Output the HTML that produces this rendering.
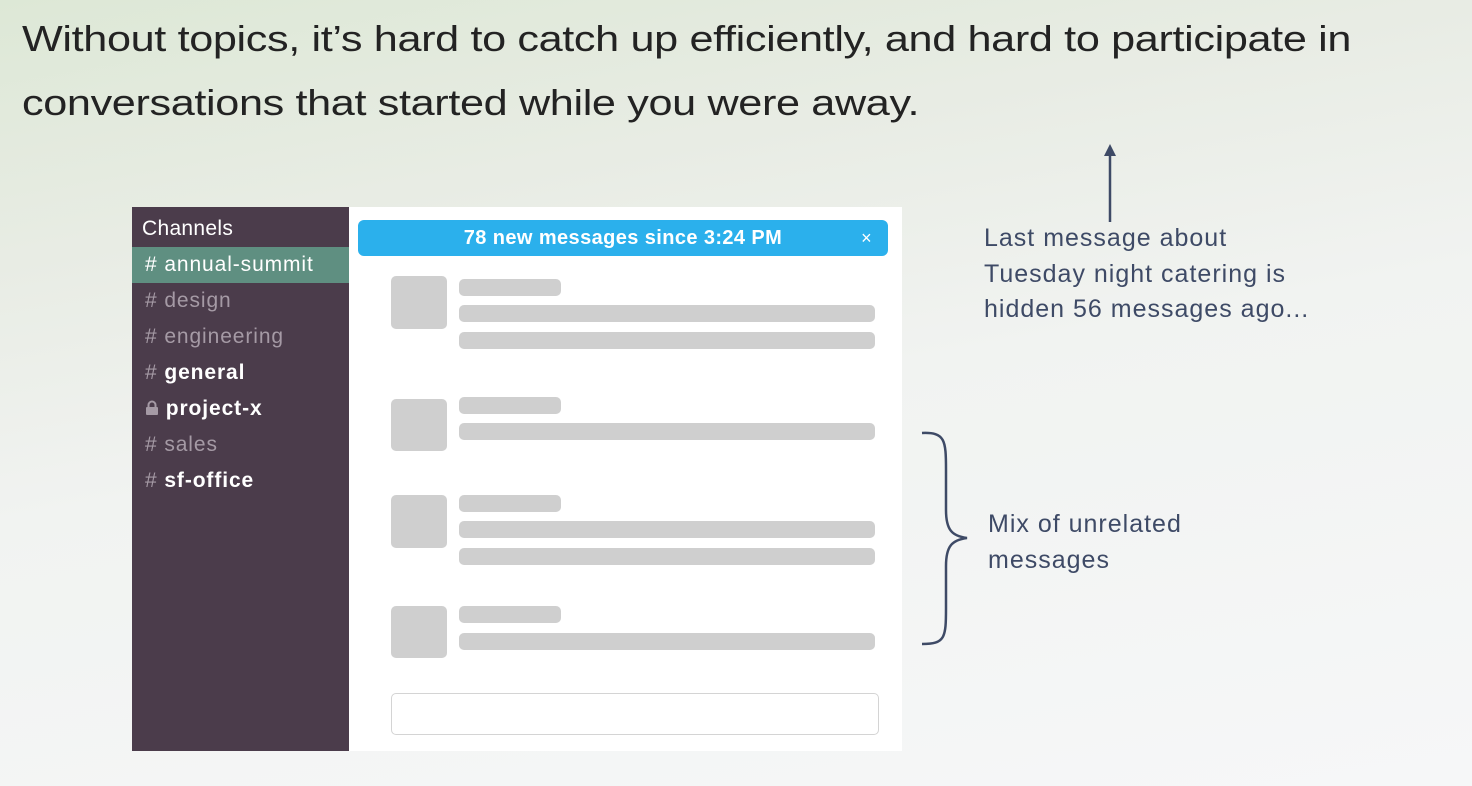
<!DOCTYPE html>
<html><head><style>
body{margin:0;width:1472px;height:786px;overflow:hidden;position:relative;font-family:"Liberation Sans",sans-serif;
background:linear-gradient(170deg,#dde8d6 0%,#e8ece4 25%,#f1f3f1 50%,#f6f7f8 100%);}
.h{position:absolute;left:22px;font-size:36px;color:#232323;white-space:nowrap;letter-spacing:-0.3px;transform:scaleX(1.2);transform-origin:0 0}
.sb{position:absolute;left:132px;top:207px;width:217px;height:544px;background:#4b3c4b}
.main{position:absolute;left:349px;top:207px;width:553px;height:544px;background:#fff}
.ch{position:absolute;left:0;width:217px;height:36px;line-height:36px;font-size:21px;letter-spacing:0.9px;color:#fff;padding-left:13px;box-sizing:border-box;white-space:nowrap}
.dim{color:#a59aa5}
.b{font-weight:bold}
.g{position:absolute;background:#cfcfcf;border-radius:5px}
.t{position:absolute;color:#3e4a66;font-size:25px;letter-spacing:1px;line-height:35.5px;white-space:nowrap}
</style></head><body>
<div class="h" style="top:18px">Without topics, it’s hard to catch up efficiently, and hard to participate in</div>
<div class="h" style="top:82px">conversations that started while you were away.</div>

<div class="sb">
<div class="ch" style="top:4px;padding-left:10px;letter-spacing:0.3px">Channels</div>
<div class="ch" style="top:40px;background:#5f8f81"># annual-summit</div>
<div class="ch dim" style="top:76px"># design</div>
<div class="ch dim" style="top:112px"># engineering</div>
<div class="ch" style="top:148px"><span class="dim">#</span> <span class="b">general</span></div>
<div class="ch" style="top:184px"><svg width="14" height="16" viewBox="0 0 14 16" style="vertical-align:-1px"><path d="M3.5 7V5a3.5 3.5 0 0 1 7 0v2" fill="none" stroke="#a59aa5" stroke-width="2"/><rect x="1" y="7" width="12" height="8" rx="1" fill="#a59aa5"/></svg> <span class="b">project-x</span></div>
<div class="ch dim" style="top:220px"># sales</div>
<div class="ch" style="top:256px"><span class="dim">#</span> <span class="b">sf-office</span></div>
</div>

<div class="main"></div>
<div style="position:absolute;left:358px;top:220px;width:530px;height:36px;background:#2bb0ec;border-radius:6px;color:#fff;font-size:20px;letter-spacing:0.4px;font-weight:bold;line-height:36px;text-align:center">78 new messages since 3:24 PM<span style="position:absolute;right:16px;font-weight:normal;font-size:18px">×</span></div>

<div class="g" style="left:391px;top:276px;width:56px;height:53px"></div>
<div class="g" style="left:459px;top:279px;width:102px;height:17px"></div>
<div class="g" style="left:459px;top:305px;width:416px;height:17px"></div>
<div class="g" style="left:459px;top:332px;width:416px;height:17px"></div>

<div class="g" style="left:391px;top:399px;width:56px;height:52px"></div>
<div class="g" style="left:459px;top:397px;width:102px;height:17px"></div>
<div class="g" style="left:459px;top:423px;width:416px;height:17px"></div>

<div class="g" style="left:391px;top:495px;width:56px;height:53px"></div>
<div class="g" style="left:459px;top:495px;width:102px;height:17px"></div>
<div class="g" style="left:459px;top:521px;width:416px;height:17px"></div>
<div class="g" style="left:459px;top:548px;width:416px;height:17px"></div>

<div class="g" style="left:391px;top:606px;width:56px;height:52px"></div>
<div class="g" style="left:459px;top:606px;width:102px;height:17px"></div>
<div class="g" style="left:459px;top:633px;width:416px;height:17px"></div>

<div style="position:absolute;left:391px;top:693px;width:488px;height:42px;border:1.5px solid #d4d4d4;border-radius:5px;box-sizing:border-box"></div>

<svg style="position:absolute;left:0;top:0" width="1472" height="786">
<line x1="1110" y1="152" x2="1110" y2="222" stroke="#3e4a66" stroke-width="2.5"/>
<path d="M1104 156 L1110 144 L1116 156 Z" fill="#3e4a66"/>
<path d="M922 433 C945 432 946 440 946 470 L946 510 C946 530 952 536 967 538 C952 540 946 546 946 566 L946 608 C946 638 945 644 922 644" fill="none" stroke="#3e4a66" stroke-width="2.5"/>
</svg>

<div class="t" style="left:984px;top:221px">Last message about<br>Tuesday night catering is<br>hidden 56 messages ago...</div>
<div class="t" style="left:988px;top:507px">Mix of unrelated<br>messages</div>
</body></html>
